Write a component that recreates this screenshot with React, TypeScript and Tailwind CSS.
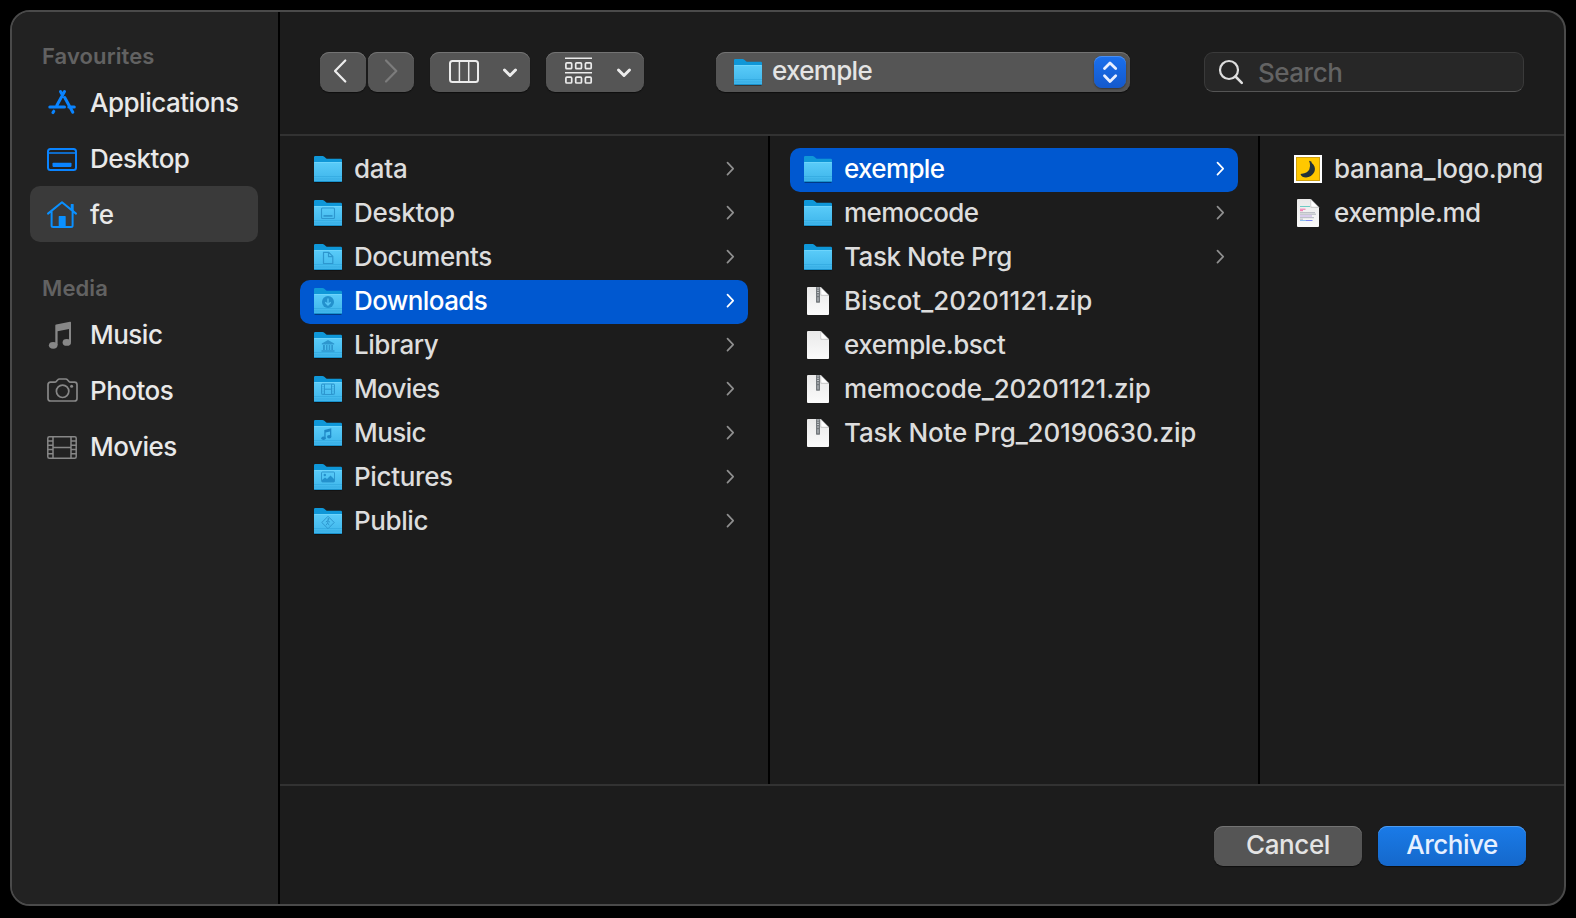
import type { ReactNode } from 'react';

type Glyph = 'none' | 'desktop' | 'documents' | 'downloads' | 'library' | 'movies' | 'music' | 'pictures' | 'public';

const GLYPHS: Record<Glyph, ReactNode> = {
  none: null,
  desktop: (
    <g>
      <rect x="7.5" y="8" width="13" height="10.5" rx="1" fill="none" stroke="#2e97cf" strokeWidth="1.1" />
      <rect x="9.5" y="15" width="9" height="1.8" fill="#2e97cf" />
    </g>
  ),
  documents: (
    <path d="M9.5 8.300h5.300l4 4v7.200h-9.300z M14.500 8.500v4.200h4.200" fill="none" stroke="#2e97cf" strokeWidth="1.200" strokeLinejoin="round" />
  ),
  downloads: (
    <g>
      <circle cx="14" cy="14" r="6" fill="#2391cd" />
      <path d="M14 10.5v6M11.3 14.3l2.7 2.7 2.7-2.7" fill="none" stroke="#55c4f5" strokeWidth="1.4" />
    </g>
  ),
  library: (
    <path d="M7.800 11.5L14 8l6.200 3.500v1H7.800zM9 13h1.900v5H9zM12 13h1.500v5H12zM14.700 13h1.500v5h-1.500zM17.300 13H19v5h-1.700zM7.500 18.200h13v1.600H7.500z" fill="#2e97cf" />
  ),
  movies: (
    <g fill="none" stroke="#2e97cf">
      <rect x="7.500" y="8" width="13" height="10.500" rx="0.800" />
      <path d="M10.500 8v10.500M17.500 8v10.500M10.500 13.200h7" />
      <path d="M9 8v10.500M19 8v10.500" strokeDasharray="1 1.200" />
    </g>
  ),
  music: (
    <g fill="#1f88c6">
      <path d="M10.300 10l7-1.700v8.300h-1.300v-5l-4.400 1v5.900h-1.300z" />
      <ellipse cx="9.500" cy="18.300" rx="2.200" ry="1.800" />
      <ellipse cx="15.200" cy="16.700" rx="2.200" ry="1.800" />
    </g>
  ),
  pictures: (
    <g>
      <rect x="7.500" y="8" width="13" height="10" rx="1" fill="none" stroke="#2e97cf" />
      <path d="M8 16l3-2.500 2 1.500 3.500-3.500 4 4V18H8z" fill="#2391cd" />
      <circle cx="10.800" cy="11" r="1.200" fill="#2391cd" />
    </g>
  ),
  public: (
    <g fill="none" stroke="#2e97cf" strokeLinejoin="round">
      <path d="M14 8.300l6.200 6.200-6.200 6.200-6.200-6.200z" />
      <path d="M11.800 14l2-1.500 2.200 1.800M14 12.500l-.3 2.500 1.500 2.300M13.700 15l-1.700 2.200" />
      <circle cx="14.400" cy="11" r="0.600" fill="#2e97cf" />
    </g>
  ),
};

function Folder({ glyph = 'none' }: { glyph?: Glyph }) {
  return (
    <svg className="h-7 w-7 shrink-0 overflow-visible" viewBox="0 0 28 28">
      <defs>
        <linearGradient id="folderFront" x1="0" y1="0" x2="0" y2="1">
          <stop offset="0" stopColor="#5accf9" />
          <stop offset="1" stopColor="#3db4ea" />
        </linearGradient>
      </defs>
      <rect x="0.300" y="24" width="27.400" height="3" rx="1" fill="#000" opacity="0.350" />
      <path d="M0 1.200Q0 0 1.200 0H8.500Q9.500 0 10.300.7L12 2.200Q12.600 2.700 13.500 2.700H26.800Q28 2.700 28 3.900V12H0z" fill="#0f97d8" />
      <path d="M0 7Q0 6 1 6H27Q28 6 28 7V25Q28 26 27 26H1Q0 26 0 25z" fill="url(#folderFront)" />
      <rect x="0" y="6" width="28" height="0.800" fill="#7edcff" opacity="0.700" />
      <rect x="0" y="20.300" width="28" height="0.700" fill="#249bd3" opacity="0.600" />
      <rect x="0" y="22.600" width="28" height="0.700" fill="#249bd3" opacity="0.400" />
      <rect x="0.300" y="25.200" width="27.400" height="0.800" fill="#1189c4" />
      {GLYPHS[glyph]}
    </svg>
  );
}

function Sheet({ children }: { children?: ReactNode }) {
  return (
    <svg className="h-7 w-7 shrink-0 overflow-visible" viewBox="0 1 28 28">
      <defs>
        <linearGradient id="sheetPaper" x1="0" y1="0" x2="0" y2="1">
          <stop offset="0" stopColor="#e9e9e9" />
          <stop offset="1" stopColor="#fbfbfb" />
        </linearGradient>
      </defs>
      <path d="M4 0H16.500L25 8.500V27Q25 28 24 28H4Q3 28 3 27V1Q3 0 4 0z" fill="url(#sheetPaper)" />
      {children}
      <path d="M16.500 8.800L17 1l8 8z" fill="#a9a9a9" opacity="0.500" />
      <path d="M16.800 0.300L24.700 8.200H18Q16.800 8.200 16.800 7z" fill="#fff" stroke="#b5b5b5" strokeWidth="0.500" />
    </svg>
  );
}

function ZipFile() {
  return (
    <Sheet>
      <rect x="12" y="0" width="4" height="15.700" rx="0.600" fill="#73787c" />
      <path d="M14 0.500v9" stroke="#c9cdd0" strokeWidth="1.800" strokeDasharray="1 1.300" />
      <rect x="13.200" y="10" width="1.600" height="4.500" rx="0.800" fill="#a4a9ad" />
    </Sheet>
  );
}

function MarkdownFile() {
  return (
    <Sheet>
      <g fill="none" strokeWidth="0.900">
        <path d="M6 7.500h10" stroke="#5fc6c0" />
        <path d="M6 10.200h5.500M6 11.700h3" stroke="#ee5a9c" />
        <path d="M6 13.700h15M6 15.200h16M6 18.700h14M6 20.200h3" stroke="#a9afb8" />
        <path d="M6 17h12" stroke="#b69be0" />
        <path d="M6 21.500h6" stroke="#7fb9ec" />
        <path d="M12 21.500h6.500" stroke="#6d78f0" />
      </g>
    </Sheet>
  );
}

function BananaFile() {
  return (
    <svg className="h-7 w-7 shrink-0 overflow-visible" viewBox="0 1 28 28">
      <rect width="28" height="28" fill="#fff" />
      <rect x="2.500" y="2.500" width="23" height="23" fill="#ffc800" stroke="#cf9f0c" />
      <path d="M15 5.800L17.300 6.600Q17.300 8 19.300 9.500Q22 13 20.300 17Q17.500 22.300 12 22.500Q7.800 22.500 6.600 19.600Q6.500 18.500 8 18.700Q13 18.500 15.300 14.500Q16.500 11 15.800 8.300z" fill="#22313a" />
    </svg>
  );
}

const Chevron = ({ active }: { active?: boolean }) => (
  <svg className="h-7 w-4 shrink-0" viewBox="0 0 16 28">
    <path
      d="M5.500 6.700l5.700 6-5.700 6"
      fill="none"
      stroke={active ? '#ffffff' : '#8f8f8f'}
      strokeWidth="1.700"
      strokeLinecap="round"
      strokeLinejoin="round"
    />
  </svg>
);

function Row({ icon, name, folder, active, tracking = 'tracking-[-0.45px]' }: { icon: ReactNode; name: string; folder?: boolean; active?: boolean; tracking?: string }) {
  return (
    <div className={`flex h-11 items-center rounded-[10px] pl-3.5 pr-2.5 ${active ? 'bg-[#0058d0] text-white' : 'text-[#dddddd]'}`}>
      {icon}
      <span className={`ml-3 flex-1 whitespace-nowrap pb-0.5 ${tracking}`}>{name}</span>
      {folder && <Chevron active={active} />}
    </div>
  );
}

function SideIcon({ children }: { children: ReactNode }) {
  return (
    <svg className="h-8 w-8 shrink-0 overflow-visible" viewBox="0 0 32 32" fill="none" strokeLinecap="round" strokeLinejoin="round">
      {children}
    </svg>
  );
}

function SideRow({ icon, name, active }: { icon: ReactNode; name: string; active?: boolean }) {
  return (
    <div className={`flex h-14 items-center gap-3 rounded-[10px] pl-4 text-[#e9e9e9] ${active ? 'bg-[#3a3a3a]' : ''}`}>
      {icon}
      <span className="pt-0.5 tracking-[-0.5px]">{name}</span>
    </div>
  );
}

const HOME: { name: string; glyph: Glyph; tracking?: string }[] = [
  { name: 'data', glyph: 'none', tracking: 'tracking-[-0.25px]' },
  { name: 'Desktop', glyph: 'desktop', tracking: 'tracking-[-0.3px]' },
  { name: 'Documents', glyph: 'documents' },
  { name: 'Downloads', glyph: 'downloads', tracking: 'tracking-[-0.6px]' },
  { name: 'Library', glyph: 'library' },
  { name: 'Movies', glyph: 'movies', tracking: 'tracking-[-0.7px]' },
  { name: 'Music', glyph: 'music', tracking: 'tracking-[-0.6px]' },
  { name: 'Pictures', glyph: 'pictures', tracking: 'tracking-[-0.35px]' },
  { name: 'Public', glyph: 'public', tracking: 'tracking-[-0.4px]' },
];

const BUTTON = 'h-10 rounded-[9px] bg-[#555555] shadow-[inset_0_1px_0_#737373,0_1px_1px_rgba(0,0,0,0.5)]';

function Sidebar() {
  return (
    <aside className="w-[268px] shrink-0 border-r-2 border-black bg-[#222222] pl-[18px] pr-5 pt-7">
      <h2 className="flex h-[34px] items-start pl-3 text-[22px] font-semibold tracking-[0.1px] text-[#626262]">Favourites</h2>
      <SideRow
        name="Applications"
        icon={
          <SideIcon>
            <g stroke="#0a84ff" strokeWidth="3">
              <path d="M18.500 5.500L10.800 19.500M3.800 21H18.500M22.800 21H28.300M14.500 5.500l1.400 2.600M18.700 11.500L26.800 26.300M7.800 25.200l-.9 1.400" />
            </g>
          </SideIcon>
        }
      />
      <SideRow
        name="Desktop"
        icon={
          <SideIcon>
            <rect x="2" y="7" width="28" height="21" rx="2.500" stroke="#0a84ff" strokeWidth="2" />
            <path d="M2 11h28" stroke="#0a84ff" strokeWidth="1.300" />
            <rect x="6.500" y="20.700" width="19" height="4.200" rx="0.800" fill="#0a84ff" />
          </SideIcon>
        }
      />
      <SideRow
        active
        name="fe"
        icon={
          <SideIcon>
            <path d="M2 15.600L16 4.200 30 15.600M5.600 13.500V27.500Q5.600 29 7.100 29H25.100Q26.600 29 26.600 27.500V13.500" stroke="#0a90ff" strokeWidth="2" />
            <path d="M12.700 29V18.600Q12.700 18 13.300 18h5.800Q19.700 18 19.700 18.600V29zM24.700 6.500Q24.700 6 25.200 6h2Q27.700 6 27.700 6.500V13.500l-3-2.500z" fill="#0a90ff" />
          </SideIcon>
        }
      />
      <h2 className="mt-[30px] flex h-[34px] items-start pl-3 text-[22px] font-semibold tracking-[0.1px] text-[#626262]">Media</h2>
      <SideRow
        name="Music"
        icon={
          <SideIcon>
            <g fill="#878787">
              <path d="M9.300 7.600Q9.300 6.700 10.200 6.500L24 3.800Q25 3.600 25 4.600V24H23V10.900L11.600 13.200V27H9.300z" />
              <ellipse cx="7.200" cy="27.300" rx="4.300" ry="3.400" />
              <ellipse cx="20.800" cy="24.400" rx="4.200" ry="3.400" />
            </g>
          </SideIcon>
        }
      />
      <SideRow
        name="Photos"
        icon={
          <SideIcon>
            <path d="M4.500 8.200H8.500Q9.800 8.200 10.700 7L11.800 5.800Q12.400 5 13.500 5H19.700Q20.800 5 21.400 5.800L22.500 7Q23.400 8.200 24.700 8.200H28.500Q31 8.200 31 10.700V24.500Q31 27 28.500 27H4.500Q2 27 2 24.500V10.700Q2 8.200 4.500 8.200z" stroke="#878787" strokeWidth="1.700" />
            <circle cx="16.600" cy="17.300" r="6.200" stroke="#878787" strokeWidth="1.700" />
            <circle cx="25.600" cy="12.300" r="1.500" fill="#878787" />
          </SideIcon>
        }
      />
      <SideRow
        name="Movies"
        icon={
          <SideIcon>
            <g stroke="#878787" strokeWidth="1.500">
              <rect x="1.800" y="6.800" width="28.400" height="21.400" rx="1.500" />
              <path d="M7 7v21M25 7v21M7 17.400h18M2 11h5M2 15.200h5M2 19.500h5M2 23.800h5M25 11h5M25 15.200h5M25 19.500h5M25 23.800h5" />
            </g>
          </SideIcon>
        }
      />
    </aside>
  );
}

function Toolbar() {
  return (
    <header className="flex h-[124px] shrink-0 items-start border-b-2 border-[#323232] pl-10 pt-10">
      <button className={`${BUTTON} w-[46px]`}>
        <svg className="h-10 w-[46px]" viewBox="0 0 46 40" fill="none">
          <path d="M25.300 8.500L15 19l10.300 10.500" stroke="#ededed" strokeWidth="2.200" strokeLinecap="round" strokeLinejoin="round" />
        </svg>
      </button>
      <button className={`${BUTTON} ml-0.5 w-[46px]`}>
        <svg className="h-10 w-[46px]" viewBox="0 0 46 40" fill="none">
          <path d="M18 8.500L28.300 19 18 29.500" stroke="#7c7c7c" strokeWidth="2.200" strokeLinecap="round" strokeLinejoin="round" />
        </svg>
      </button>
      <button className={`${BUTTON} ml-4 w-[100px]`}>
        <svg className="h-10 w-[100px]" viewBox="0 0 100 40" fill="none" stroke="#ececec">
          <rect x="20" y="9" width="28" height="21" rx="2.500" strokeWidth="2" />
          <path d="M29.400 9v21M38.700 9v21" strokeWidth="1.500" />
          <path d="M74.500 18l5.500 5.500 5.500-5.500" strokeWidth="3" strokeLinecap="round" strokeLinejoin="round" />
        </svg>
      </button>
      <button className={`${BUTTON} ml-4 w-[98px]`}>
        <svg className="h-10 w-[98px]" viewBox="0 0 98 40" fill="none" stroke="#ececec">
          <path d="M19 6.300h27M19 20.700h27" strokeWidth="1.600" />
          <g strokeWidth="1.700">
            <rect x="19.900" y="10.900" width="5.800" height="5.800" rx="1" />
            <rect x="29.700" y="10.900" width="5.800" height="5.800" rx="1" />
            <rect x="39.400" y="10.900" width="5.800" height="5.800" rx="1" />
            <rect x="19.900" y="25.200" width="5.800" height="5.800" rx="1" />
            <rect x="29.700" y="25.200" width="5.800" height="5.800" rx="1" />
            <rect x="39.400" y="25.200" width="5.800" height="5.800" rx="1" />
          </g>
          <path d="M72.500 18l5.500 5.500 5.500-5.500" strokeWidth="3" strokeLinecap="round" strokeLinejoin="round" />
        </svg>
      </button>
      <button className={`${BUTTON} ml-[72px] flex w-[414px] items-center pl-[18px] pr-1 text-left`}>
        <span className="flex pt-0.5">
          <Folder />
        </span>
        <span className="ml-2.5 flex-1 pb-0.5 tracking-[-0.7px] text-[#e4e4e4]">exemple</span>
        <svg className="h-8 w-8 rounded-lg bg-linear-to-b from-[#1a70ee] to-[#1459cc] shadow-[inset_0_1px_0_#4a8ff2,0_1px_2px_rgba(0,0,0,0.4)]" viewBox="0 0 32 32" fill="none">
          <path d="M10.500 12.500L16 6.900l5.700 5.600M10.500 19.800L16 25.400l5.700-5.600" stroke="#e8efff" strokeWidth="2.800" strokeLinecap="round" strokeLinejoin="round" />
        </svg>
      </button>
      <div className="ml-[74px] flex h-10 w-80 items-center rounded-[9px] border border-[#3a3a3a] border-b-[#555555] bg-[#272727] pl-[13px]">
        <svg className="h-[26px] w-[26px] shrink-0" viewBox="0 0 26 26" fill="none" stroke="#dedede" strokeWidth="2.200">
          <circle cx="11" cy="11" r="9" />
          <path d="M17.500 17.500l6.300 6.300" strokeWidth="2.600" strokeLinecap="round" />
        </svg>
        <span className="ml-3.5 pt-0.5 tracking-[-0.5px] text-[#636363]">Search</span>
      </div>
    </header>
  );
}

export default function App() {
  return (
    <div className="h-[918px] w-[1576px] overflow-hidden bg-black p-2.5 font-['Inter',sans-serif] text-[26px] font-[450] leading-8">
      <div className="flex h-[896px] w-[1556px] overflow-hidden rounded-[20px] border-2 border-[#4a4a4a] bg-[#1c1c1c]">
        <Sidebar />
        <main className="flex min-w-0 flex-1 flex-col">
          <Toolbar />
          <div className="flex min-h-0 flex-1">
            <section className="w-[490px] shrink-0 border-r-2 border-black px-5 pt-3">
              {HOME.map((f) => (
                <Row key={f.name} icon={<Folder glyph={f.glyph} />} name={f.name} folder active={f.name === 'Downloads'} tracking={f.tracking} />
              ))}
            </section>
            <section className="w-[490px] shrink-0 border-r-2 border-black px-5 pt-3">
              <Row icon={<Folder />} name="exemple" folder active tracking="tracking-[-0.65px]" />
              <Row icon={<Folder />} name="memocode" folder tracking="tracking-[-0.6px]" />
              <Row icon={<Folder />} name="Task Note Prg" folder tracking="tracking-[-0.45px]" />
              <Row icon={<ZipFile />} name="Biscot_20201121.zip" tracking="tracking-[0px]" />
              <Row icon={<Sheet />} name="exemple.bsct" />
              <Row icon={<ZipFile />} name="memocode_20201121.zip" tracking="tracking-[-0.18px]" />
              <Row icon={<ZipFile />} name="Task Note Prg_20190630.zip" tracking="tracking-[-0.16px]" />
            </section>
            <section className="min-w-0 flex-1 pl-5 pt-3">
              <Row icon={<BananaFile />} name="banana_logo.png" tracking="tracking-[-0.38px]" />
              <Row icon={<MarkdownFile />} name="exemple.md" tracking="tracking-[-0.55px]" />
            </section>
          </div>
          <footer className="flex h-[120px] shrink-0 items-start justify-end gap-4 border-t-2 border-[#323232] pr-[38px] pt-10">
            <button className={`${BUTTON} w-[148px] pb-0.5 tracking-[-0.4px] text-[#e4e4e4]`}>Cancel</button>
            <button className="h-10 w-[148px] rounded-[9px] bg-linear-to-b from-[#1a7be8] to-[#1568cb] pb-0.5 tracking-[-0.5px] text-[#e6f0ff] shadow-[inset_0_1px_0_#4d9bf0,0_1px_1px_rgba(0,0,0,0.5)]">
              Archive
            </button>
          </footer>
        </main>
      </div>
    </div>
  );
}
